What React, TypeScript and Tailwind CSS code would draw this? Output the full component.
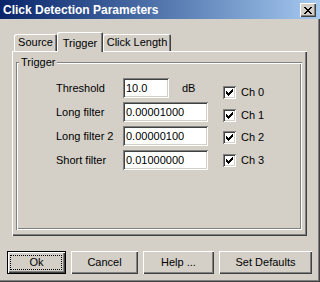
import React from "react";

const raised =
  "shadow-[inset_1px_1px_0_#ffffff,inset_-1px_-1px_0_#404040,inset_-2px_-2px_0_#808080]";
const sunken =
  "shadow-[inset_1px_1px_0_#808080,inset_-1px_-1px_0_#ffffff,inset_2px_2px_0_#404040,inset_-2px_-2px_0_#d4d0c8]";

function CheckMark() {
  const rows: [number, number, number][] = [
    [6, 0, 1],
    [5, 1, 2],
    [0, 2, 1],
    [4, 2, 3],
    [0, 3, 2],
    [3, 3, 3],
    [0, 4, 5],
    [1, 5, 3],
    [2, 6, 1],
  ];
  return (
    <svg width="7" height="7" viewBox="0 0 7 7" shapeRendering="crispEdges">
      {rows.map(([x, y, w], i) => (
        <rect key={i} x={x} y={y} width={w} height={1} fill="#000" />
      ))}
    </svg>
  );
}

function CloseGlyph() {
  const rows: [number, number, number][] = [
    [0, 0, 2],
    [6, 0, 2],
    [1, 1, 2],
    [5, 1, 2],
    [2, 2, 4],
    [3, 3, 2],
    [2, 4, 4],
    [1, 5, 2],
    [5, 5, 2],
    [0, 6, 2],
    [6, 6, 2],
  ];
  return (
    <svg width="8" height="7" viewBox="0 0 8 7" shapeRendering="crispEdges">
      {rows.map(([x, y, w], i) => (
        <rect key={i} x={x} y={y} width={w} height={1} fill="#000" />
      ))}
    </svg>
  );
}

function Checkbox({ label, className = "" }: { label: string; className?: string }) {
  return (
    <div className={"flex items-center h-[13px] " + className}>
      <div
        className={
          "w-[13px] h-[13px] bg-white flex items-center justify-center " + sunken
        }
      >
        <CheckMark />
      </div>
      <span className="ml-[5px] leading-[13px]">{label}</span>
    </div>
  );
}

function Field({ value, wide }: { value: string; wide: boolean }) {
  return (
    <div
      className={
        "h-[20px] bg-white flex items-center pl-[3px] " +
        sunken +
        (wide ? " w-[85px]" : " w-[46px]")
      }
    >
      {value}
    </div>
  );
}

export default function App() {
  const rows = [
    { label: "Threshold", value: "10.0", wide: false },
    { label: "Long filter", value: "0.00001000", wide: true },
    { label: "Long filter 2", value: "0.00000100", wide: true },
    { label: "Short filter", value: "0.01000000", wide: true },
  ];
  return (
    <div className="w-[320px] h-[282px] bg-[#d4d0c8] text-[11px] text-black font-['Liberation_Sans',Arial,sans-serif] flex flex-col shadow-[inset_-1px_-1px_0_#404040,inset_-2px_-2px_0_#808080] overflow-hidden">
      {/* Title bar */}
      <div className="h-[19px] shrink-0 flex items-start bg-linear-to-r from-[#0a246a] to-[#a6caf0] pl-[3px] pr-[4px]">
        <span className="mt-[3px] text-white font-bold text-[12px] leading-[14px]">
          Click Detection Parameters
        </span>
        <div
          className={
            "ml-auto mt-[3px] w-[16px] h-[14px] bg-[#d4d0c8] flex items-center justify-center " +
            raised
          }
        >
          <CloseGlyph />
        </div>
      </div>

      {/* Tabs */}
      <div className="mt-[13px] ml-[14px] h-[19px] flex items-end">
        <div
          className={
            "w-[43px] h-[17px] flex items-center justify-center rounded-t-[2px] shadow-[inset_1px_1px_0_#ffffff,inset_-1px_0_0_#404040,inset_-2px_0_0_#808080]"
          }
        >
          Source
        </div>
        <div className="w-[46px] h-[20px] mb-[-1px] relative z-10 bg-[#d4d0c8] flex items-start pt-[3px] justify-center rounded-t-[2px] shadow-[inset_1px_1px_0_#ffffff,inset_-1px_0_0_#404040,inset_-2px_0_0_#808080]">
          Trigger
        </div>
        <div className="w-[68px] h-[17px] flex items-center justify-center rounded-t-[2px] shadow-[inset_1px_1px_0_#ffffff,inset_-1px_0_0_#404040,inset_-2px_0_0_#808080]">
          Click Length
        </div>
      </div>

      {/* Panel */}
      <div className="ml-[12px] w-[295px] h-[185px] shrink-0 pt-[11px] pl-[4px] shadow-[inset_1px_1px_0_#ffffff,inset_-1px_-1px_0_#404040,inset_-2px_-2px_0_#808080]">
        <div className="relative w-[286px] h-[168px] shadow-[inset_1px_1px_0_#808080,inset_-1px_-1px_0_#ffffff,inset_2px_2px_0_#ffffff,inset_-2px_-2px_0_#808080] pt-[16px] pl-[40px] flex">
          <span className="absolute left-[3px] top-[-6px] px-[2px] bg-[#d4d0c8] leading-[13px]">
            Trigger
          </span>
          <div className="flex flex-col gap-[4px]">
            {rows.map((r) => (
              <div key={r.label} className="h-[20px] flex items-center">
                <span className="w-[67px]">{r.label}</span>
                <div className="w-[100px] flex items-center">
                  <Field value={r.value} wide={r.wide} />
                  {!r.wide && <span className="ml-[13px]">dB</span>}
                </div>
              </div>
            ))}
          </div>
          <div className="flex flex-col pt-[8px]">
            <Checkbox label="Ch 0" />
            <Checkbox label="Ch 1" className="mt-[10px]" />
            <Checkbox label="Ch 2" className="mt-[9px]" />
            <Checkbox label="Ch 3" className="mt-[10px]" />
          </div>
        </div>
      </div>

      {/* Buttons */}
      <div className="mt-[15px] pl-[7px] flex gap-[5px]">
        <div className="relative w-[59px] h-[23px] border border-black flex items-center justify-center shadow-[inset_1px_1px_0_#ffffff,inset_-1px_-1px_0_#404040,inset_-2px_-2px_0_#808080]">
          <span className="absolute top-[3px] bottom-[3px] left-[2px] right-[3px] border border-dotted border-black" />
          Ok
        </div>
        <div className={"w-[67px] h-[23px] flex items-center justify-center " + raised}>
          Cancel
        </div>
        <div className={"w-[71px] h-[23px] flex items-center justify-center " + raised}>
          Help ...
        </div>
        <div className={"w-[93px] h-[23px] flex items-center justify-center " + raised}>
          Set Defaults
        </div>
      </div>
    </div>
  );
}
